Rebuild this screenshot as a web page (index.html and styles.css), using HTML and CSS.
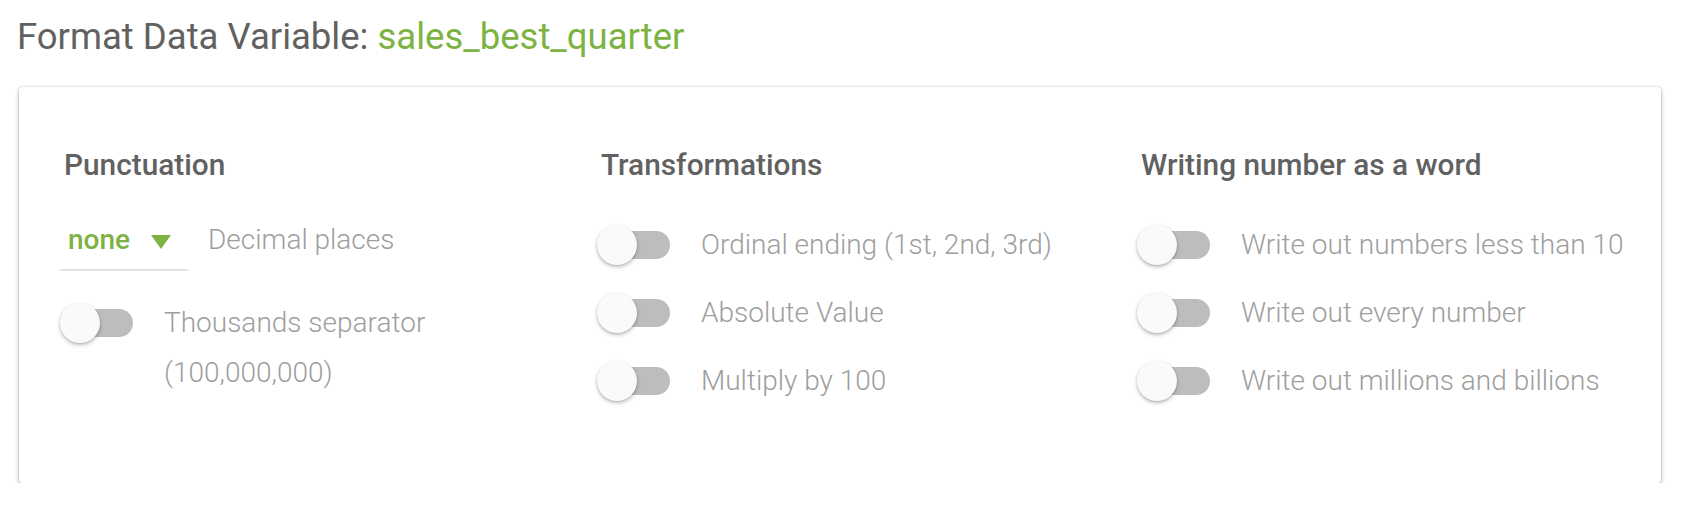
FILE: index.html
```html
<!DOCTYPE html>
<html>
<head>
<meta charset="utf-8">
<link rel="stylesheet" href="styles.css">
</head>
<body>
<div class="page">
  <h1 class="title">Format Data Variable: <span class="var">sales_best_quarter</span></h1>
  <div class="card">
    <section class="col">
      <h2 class="heading">Punctuation</h2>
      <div class="select-row">
        <div class="select">
          <span class="select-value">none</span>
          <svg class="caret" width="20" height="14" viewBox="0 0 20 14"><polygon points="0,0 20,0 10,14" fill="#7cb342"/></svg>
        </div>
        <span class="label">Decimal places</span>
      </div>
      <div class="toggle-row tall">
        <span class="toggle"><span class="track"></span><span class="thumb"></span></span>
        <span class="label">Thousands separator<br>(100,000,000)</span>
      </div>
    </section>
    <section class="col">
      <h2 class="heading">Transformations</h2>
      <div class="list">
        <div class="toggle-row"><span class="toggle"><span class="track"></span><span class="thumb"></span></span><span class="label">Ordinal ending (1st, 2nd, 3rd)</span></div>
        <div class="toggle-row"><span class="toggle"><span class="track"></span><span class="thumb"></span></span><span class="label">Absolute Value</span></div>
        <div class="toggle-row"><span class="toggle"><span class="track"></span><span class="thumb"></span></span><span class="label">Multiply by 100</span></div>
      </div>
    </section>
    <section class="col">
      <h2 class="heading">Writing number as a word</h2>
      <div class="list">
        <div class="toggle-row"><span class="toggle"><span class="track"></span><span class="thumb"></span></span><span class="label">Write out numbers less than 10</span></div>
        <div class="toggle-row"><span class="toggle"><span class="track"></span><span class="thumb"></span></span><span class="label">Write out every number</span></div>
        <div class="toggle-row"><span class="toggle"><span class="track"></span><span class="thumb"></span></span><span class="label">Write out millions and billions</span></div>
      </div>
    </section>
  </div>
</div>
</body>
</html>
```
FILE: styles.css
```css
* { box-sizing: border-box; }
html, body { margin: 0; padding: 0; background: #ffffff; }
body { font-family: Roboto, "Liberation Sans", sans-serif; }

.page {
  padding: 16px 25px 0 17px;
}

.title {
  margin: 0;
  font-size: 36.5px;
  line-height: 42px;
  font-weight: 400;
  color: #616161;
}
.var { color: #7cb342; }

.card {
  margin: 29px 0 0 2px;
  height: 396px;
  background: #fff;
  border-radius: 3px;
  box-shadow: 0 2px 4px rgba(0,0,0,0.3), 0 0 2px rgba(0,0,0,0.22);
  padding: 60px 0 0 41px;
  display: grid;
  grid-template-columns: 537px 540px 1fr;
}

.col { display: flex; flex-direction: column; }

.heading {
  margin: 0;
  padding-left: 4px;
  font-size: 29.8px;
  line-height: 35px;
  font-weight: 500;
  color: #616161;
}

.label {
  font-size: 28px;
  line-height: 50px;
  font-weight: 300;
  color: #9e9e9e;
}

.select-row {
  margin-top: 33px;
  display: flex;
  align-items: flex-start;
  gap: 20px;
}
.select {
  width: 128px;
  display: flex;
  align-items: center;
  padding: 0 0 4px 8px;
  border-bottom: 2px solid #e0e0e0;
  border-radius: 0 0 2px 2px;
}
.select-value {
  font-size: 28px;
  line-height: 50px;
  font-weight: 500;
  color: #7cb342;
}
.caret { margin-left: 21px; margin-top: 4px; }

.toggle-row {
  display: flex;
  align-items: flex-start;
  gap: 30px;
}
.toggle-row.tall { margin-top: 27px; }

.list {
  margin-top: 38px;
  display: flex;
  flex-direction: column;
  gap: 18px;
}

.toggle {
  position: relative;
  flex: none;
  width: 74px;
  height: 50px;
}
.track {
  position: absolute;
  left: 1px;
  top: 11px;
  width: 72px;
  height: 28px;
  border-radius: 14px;
  background: #bdbdbd;
}
.thumb {
  position: absolute;
  left: 0;
  top: 5px;
  width: 40px;
  height: 40px;
  border-radius: 50%;
  background: #fafafa;
  box-shadow: 0 2px 4px rgba(0,0,0,0.22), 0 1px 2px rgba(0,0,0,0.14);
}
```
